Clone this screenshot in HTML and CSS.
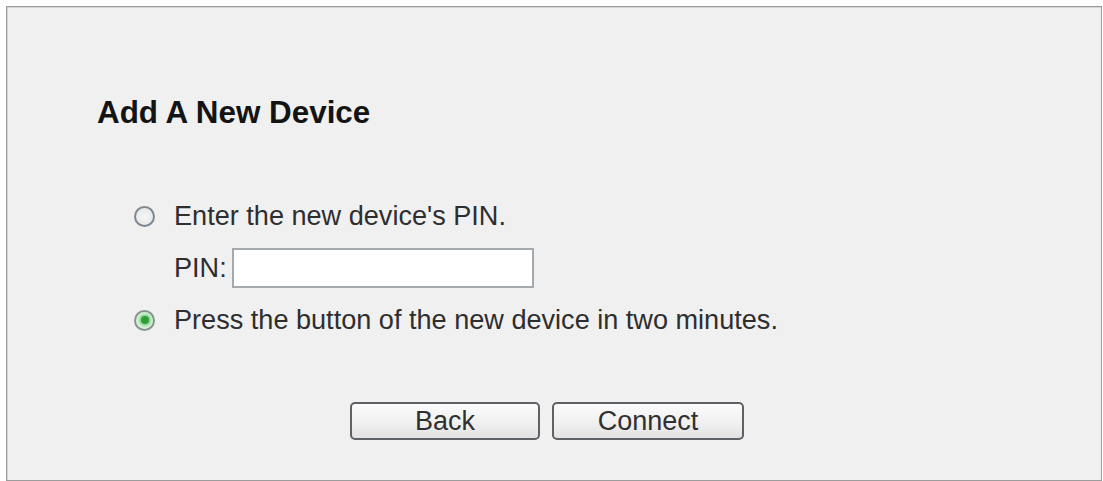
FILE: index.html
```html
<!DOCTYPE html>
<html>
<head>
<meta charset="utf-8">
<link rel="stylesheet" href="styles.css">
</head>
<body>
<div class="panel">
  <h1 class="title">Add A New Device</h1>
  <div class="options">
    <div class="row">
      <span class="radio"></span>
      <span class="label">Enter the new device's PIN.</span>
    </div>
    <div class="row pin-row">
      <span class="label">PIN:</span>
      <span class="input"></span>
    </div>
    <div class="row">
      <span class="radio checked"></span>
      <span class="label">Press the button of the new device in two minutes.</span>
    </div>
  </div>
  <div class="buttons">
    <button class="btn btn-back">Back</button>
    <button class="btn btn-connect">Connect</button>
  </div>
</div>
</body>
</html>
```

FILE: styles.css
```css
html, body {
  margin: 0;
  padding: 0;
  background: #ffffff;
}
body {
  font-family: "Liberation Sans", Arial, sans-serif;
  padding: 6px 1px 0 6px;
}
.panel {
  box-sizing: border-box;
  height: 475px;
  background: #f0f0f0;
  border: 1px solid #9c9c9c;
  box-shadow: inset 1px 1px 0 #d4d4d4;
  padding: 86px 0 0 90px;
}
.title {
  margin: 0;
  font-size: 31.4px;
  line-height: 40px;
  font-weight: bold;
  color: #141414;
}
.options {
  margin-top: 57px;
  padding-left: 37px;
}
.row {
  display: flex;
  align-items: center;
  height: 52px;
}
.radio {
  box-sizing: border-box;
  width: 21px;
  height: 21px;
  border-radius: 50%;
  border: 2px solid #7f8890;
  background: radial-gradient(circle at 50% 50%, #f6f6f6 0, #e0e3e6 100%);
  margin-right: 19px;
  flex: none;
  display: flex;
  align-items: center;
  justify-content: center;
}
.radio.checked {
  border-color: #84958a;
  background: radial-gradient(circle, #c9eec9 0, #e3f3e3 70%, #eef2ee 100%);
}
.radio.checked::after {
  content: "";
  width: 8px;
  height: 8px;
  border-radius: 50%;
  background: #2f9e3a;
  box-shadow: 0 0 3px 2px #7fd28a;
}
.label {
  font-size: 27.1px;
  color: #2e2e2e;
}
.pin-row {
  padding-left: 40px;
}
.pin-row .label {
  margin-right: 5px;
}
.input {
  box-sizing: border-box;
  width: 302px;
  height: 40px;
  background: #ffffff;
  border: 2px solid #a4a9ad;
}
.buttons {
  display: flex;
  gap: 12px;
  margin-top: 56px;
  padding-left: 253px;
}
.btn {
  box-sizing: border-box;
  height: 38px;
  margin: 0;
  padding: 0;
  font-family: "Liberation Sans", Arial, sans-serif;
  font-size: 27px;
  color: #303030;
  border: 2px solid #5e6266;
  border-radius: 5px;
  background: linear-gradient(#fbfbfb, #f0f0f0 55%, #e2e2e2);
  line-height: 32px;
}
.btn-back {
  width: 190px;
}
.btn-connect {
  width: 192px;
}
```
